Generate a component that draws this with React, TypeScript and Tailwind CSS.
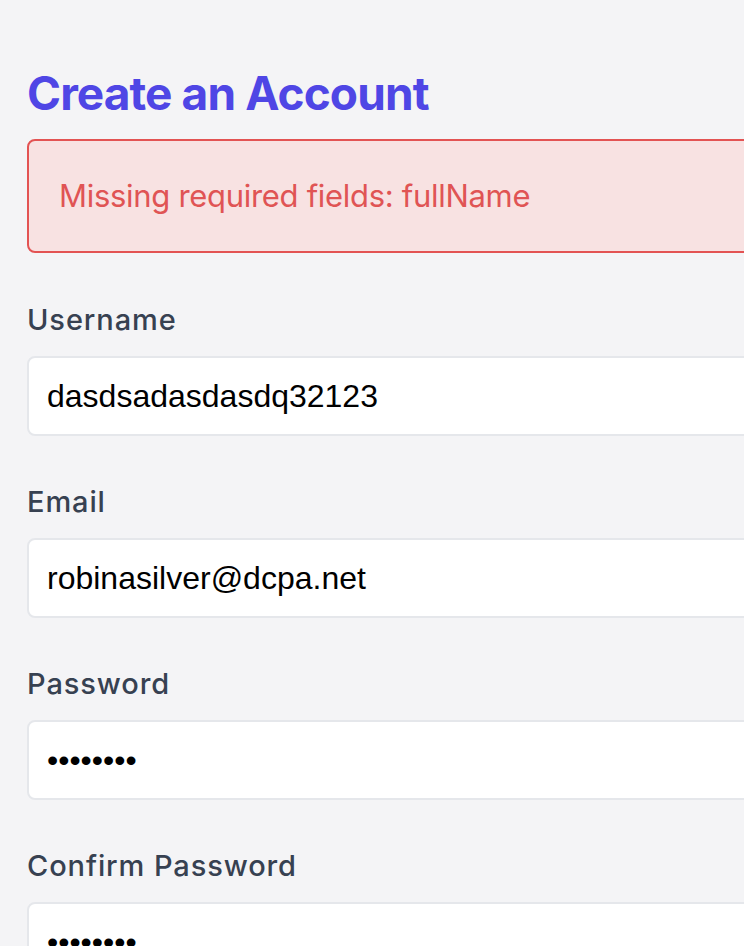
import React from "react";

const fields = [
  { label: "Username", type: "text", value: "dasdsadasdasdq32123" },
  { label: "Email", type: "email", value: "robinasilver@dcpa.net" },
  { label: "Password", type: "password", value: "12345678" },
  { label: "Confirm Password", type: "password", value: "12345678" },
];

export default function App() {
  return (
    <div className="h-[946px] w-[744px] overflow-hidden bg-[#f4f4f6] font-['Inter',sans-serif]">
      <div className="w-[900px] pl-[27px] pt-[63px]">
        <h1 className="mb-[16px] text-[46px] font-bold leading-[60px] tracking-[-0.9px] text-[#4f46e5]">
          Create an Account
        </h1>

        <div className="mb-[49px] flex h-[114px] items-center rounded-[8px] border-2 border-[#e35353] bg-[#f8e2e2] px-[30px]">
          <p className="text-[31px] leading-[48px] tracking-[-0.3px] text-[#e05454]">Missing required fields: fullName</p>
        </div>

        <form className="flex flex-col gap-[48px]">
          {fields.map((field) => (
            <div key={field.label} className="flex flex-col">
              <label className="mb-[18px] text-[29px] font-medium leading-[36px] tracking-[0.9px] text-[#374151]">
                {field.label}
              </label>
              <input
                type={field.type}
                value={field.value}
                readOnly
                className="h-[80px] w-full rounded-[8px] border-2 border-[#e5e7eb] bg-white px-[18px] font-['Liberation_Sans',Arial,sans-serif] text-[32px] text-black outline-none"
              />
            </div>
          ))}
        </form>
      </div>
    </div>
  );
}
